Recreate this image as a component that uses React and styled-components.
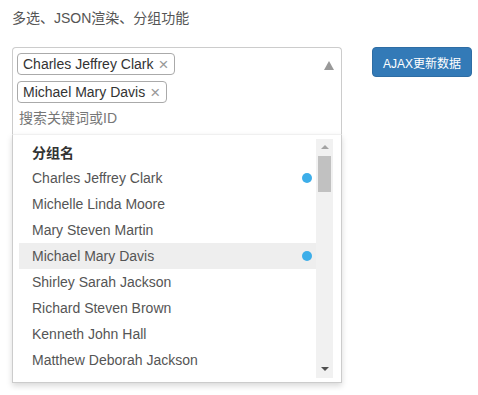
import React from 'react'
import styled, { createGlobalStyle } from 'styled-components'

const Global = createGlobalStyle`
  body {
    margin: 0;
    background: #fff;
    font-family: "Liberation Sans", "Noto Sans CJK SC", sans-serif;
  }
`

const Page = styled.div`
  padding: 8px 12px;
`

const Title = styled.div`
  font-size: 14px;
  line-height: 20px;
  color: #555;
`

const Row = styled.div`
  display: flex;
  align-items: flex-start;
  gap: 30px;
  margin-top: 19px;
`

const Select = styled.div`
  width: 330px;
  flex-shrink: 0;
  display: flex;
  flex-direction: column;
`

const Field = styled.div`
  box-sizing: border-box;
  border: 1px solid #ccc;
  border-bottom: none;
  border-radius: 4px 4px 0 0;
  display: flex;
  align-items: flex-start;
  padding: 5px 4px 6px 4px;
`

const Tags = styled.div`
  flex: 1;
  display: flex;
  flex-direction: column;
  align-items: flex-start;
  gap: 6px;
`

const Tag = styled.div`
  display: flex;
  align-items: center;
  height: 22px;
  box-sizing: border-box;
  border: 1px solid #aaa;
  border-radius: 4px;
  padding: 0 6px 0 5px;
  font-size: 14px;
  color: #333;
`

const Remove = styled.span`
  margin-left: 5px;
  color: #999;
  font-size: 17px;
  line-height: 1;
`

const Placeholder = styled.div`
  margin-top: -1px;
  padding-left: 2px;
  font-size: 14px;
  line-height: 20px;
  color: #777;
`

const Caret = styled.div`
  width: 0;
  height: 0;
  margin: 8px 3px 0 0;
  border-left: 5px solid transparent;
  border-right: 5px solid transparent;
  border-bottom: 9px solid #999;
`

const Dropdown = styled.div`
  height: 249px;
  box-sizing: border-box;
  background: #fff;
  border: 1px solid #ccc;
  border-top-color: #f0f0f0;
  box-shadow: 0 3px 6px rgba(0, 0, 0, 0.15);
  padding: 4px 8px 4px 6px;
  display: flex;
`

const List = styled.div`
  flex: 1;
  overflow: hidden;
`

const Item = styled.div`
  display: flex;
  align-items: center;
  justify-content: space-between;
  height: 26px;
  padding: 0 4px 0 13px;
  font-size: 14px;
  color: ${p => (p.$header ? '#333' : '#555')};
  font-weight: ${p => (p.$header ? 'bold' : 'normal')};
  background: ${p => (p.$active ? '#eee' : 'transparent')};
`

const Dot = styled.span`
  width: 10px;
  height: 10px;
  border-radius: 50%;
  background: #3daee9;
`

const Scrollbar = styled.div`
  width: 17px;
  background: #f1f1f1;
  display: flex;
  flex-direction: column;
  align-items: center;
`

const ArrowUp = styled.div`
  width: 0;
  height: 0;
  margin-top: 6px;
  border-left: 4px solid transparent;
  border-right: 4px solid transparent;
  border-bottom: 4px solid #a3a3a3;
`

const Thumb = styled.div`
  width: 13px;
  height: 36px;
  margin-top: 7px;
  background: #c1c1c1;
`

const ArrowDown = styled.div`
  width: 0;
  height: 0;
  margin-top: auto;
  margin-bottom: 7px;
  border-left: 4px solid transparent;
  border-right: 4px solid transparent;
  border-top: 4px solid #505050;
`

const Button = styled.button`
  flex-shrink: 0;
  white-space: nowrap;
  height: 30px;
  padding: 0 10px;
  border: 1px solid #2e6da4;
  border-radius: 4px;
  background: #337ab7;
  color: #fff;
  font-family: inherit;
  font-size: 12px;
`

const people = [
  { name: 'Charles Jeffrey Clark', selected: true },
  { name: 'Michelle Linda Moore' },
  { name: 'Mary Steven Martin' },
  { name: 'Michael Mary Davis', selected: true, active: true },
  { name: 'Shirley Sarah Jackson' },
  { name: 'Richard Steven Brown' },
  { name: 'Kenneth John Hall' },
  { name: 'Matthew Deborah Jackson' },
]

export default function App() {
  const chosen = people.filter(p => p.selected)
  return (
    <Page>
      <Global />
      <Title>多选、JSON渲染、分组功能</Title>
      <Row>
        <Select>
          <Field>
            <Tags>
              {chosen.map(p => (
                <Tag key={p.name}>
                  {p.name}
                  <Remove>×</Remove>
                </Tag>
              ))}
              <Placeholder>搜索关键词或ID</Placeholder>
            </Tags>
            <Caret />
          </Field>
          <Dropdown>
            <List>
              <Item $header>分组名</Item>
              {people.map(p => (
                <Item key={p.name} $active={p.active}>
                  {p.name}
                  {p.selected && <Dot />}
                </Item>
              ))}
            </List>
            <Scrollbar>
              <ArrowUp />
              <Thumb />
              <ArrowDown />
            </Scrollbar>
          </Dropdown>
        </Select>
        <Button>AJAX更新数据</Button>
      </Row>
    </Page>
  )
}
